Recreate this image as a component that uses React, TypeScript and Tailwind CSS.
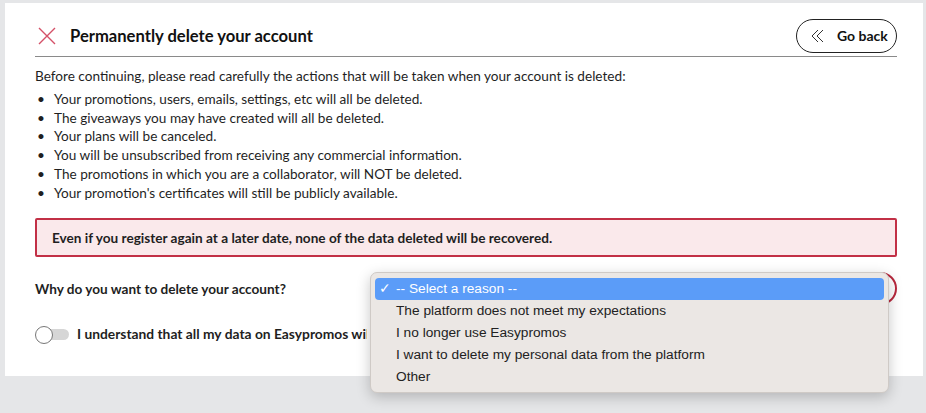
import React from "react";

const bullets = [
  "Your promotions, users, emails, settings, etc will all be deleted.",
  "The giveaways you may have created will all be deleted.",
  "Your plans will be canceled.",
  "You will be unsubscribed from receiving any commercial information.",
  "The promotions in which you are a collaborator, will NOT be deleted.",
  "Your promotion's certificates will still be publicly available.",
];

const options = [
  "The platform does not meet my expectations",
  "I no longer use Easypromos",
  "I want to delete my personal data from the platform",
  "Other",
];

export default function App() {
  return (
    <div
      className="w-[926px] h-[413px] bg-[#e5e6e8] pt-[3px] pl-[5px] overflow-hidden text-[#1f1f1f]"
      style={{ fontFamily: "Lato, 'Open Sans', sans-serif" }}
    >
      <div className="relative w-[918px] h-[373px] bg-white pl-[30px] pr-[26px]">
        {/* header */}
        <div className="flex items-center justify-between h-[54px] border-b border-[#8a8a8a] pt-[14px]">
          <div className="flex items-center">
            <svg width="18" height="18" viewBox="0 0 18 18" className="ml-[3px]">
              <path d="M1 1 L17 17 M17 1 L1 17" stroke="#d45168" strokeWidth="1.4" fill="none" />
            </svg>
            <h1 className="ml-[14px] text-[16.6px] font-bold text-[#111]">Permanently delete your account</h1>
          </div>
          <button className="flex items-center h-[34px] w-[101px] rounded-full border border-[#222] pl-[14px] -mt-[2px]">
            <svg width="14" height="14" viewBox="0 0 14 14">
              <path d="M7 1 L1 7 L7 13 M12 1 L6 7 L12 13" stroke="#333" strokeWidth="1" fill="none" />
            </svg>
            <span className="ml-[12px] text-[14px] font-bold text-[#111]">Go back</span>
          </button>
        </div>

        {/* intro */}
        <p className="mt-[10px] text-[13.6px] leading-[19px]">
          Before continuing, please read carefully the actions that will be taken when your account is deleted:
        </p>
        <ul className="mt-[4px] text-[13.6px] leading-[18.7px]">
          {bullets.map((b) => (
            <li key={b} className="flex">
              <span className="w-[19px] pl-[2px]">•</span>
              <span>{b}</span>
            </li>
          ))}
        </ul>

        {/* alert */}
        <div className="mt-[16px] h-[39px] flex items-center border-2 border-[#c23046] bg-[#fae9eb] rounded-[2px] pl-[15px] text-[13.6px] font-bold">
          Even if you register again at a later date, none of the data deleted will be recovered.
        </div>

        {/* reason row */}
        <div className="mt-[15px] flex items-center h-[33px]">
          <span className="text-[13.6px] font-bold w-[343px]">Why do you want to delete your account?</span>
          <div className="flex-1 h-[33px] rounded-full border-2 border-[#b8283d] bg-white" />
        </div>

        {/* toggle */}
        <div className="mt-[19px] flex items-center">
          <div className="relative w-[34px] h-[18px] flex items-center shrink-0">
            <div className="absolute left-[5px] right-0 h-[11px] rounded-full bg-[#d6d6d6]" />
            <div className="absolute left-0 w-[18px] h-[18px] rounded-full bg-white border border-[#777]" />
          </div>
          <span className="ml-[8px] w-[290px] overflow-hidden whitespace-nowrap text-[13.8px] font-bold">
            I understand that all my data on Easypromos will be permanently deleted
          </span>
        </div>

        {/* native dropdown menu */}
        <div
          className="absolute left-[365px] top-[269px] w-[519px] h-[121px] rounded-[7px] bg-[#ebe7e4] border border-[#cfcac6] shadow-[0_4px_14px_rgba(0,0,0,0.22)] px-[4px] pt-[5px]"
          style={{ fontFamily: "'Liberation Sans', Arial, sans-serif" }}
        >
          <div className="h-[22px] rounded-[4px] bg-[#5b9cf8] text-white text-[13.7px] flex items-center pl-[4px]">
            <span className="w-[17px]">✓</span>
            <span>-- Select a reason --</span>
          </div>
          {options.map((o) => (
            <div key={o} className="h-[22px] flex items-center pl-[21px] text-[13.7px] text-[#222]">
              {o}
            </div>
          ))}
        </div>
      </div>
    </div>
  );
}
